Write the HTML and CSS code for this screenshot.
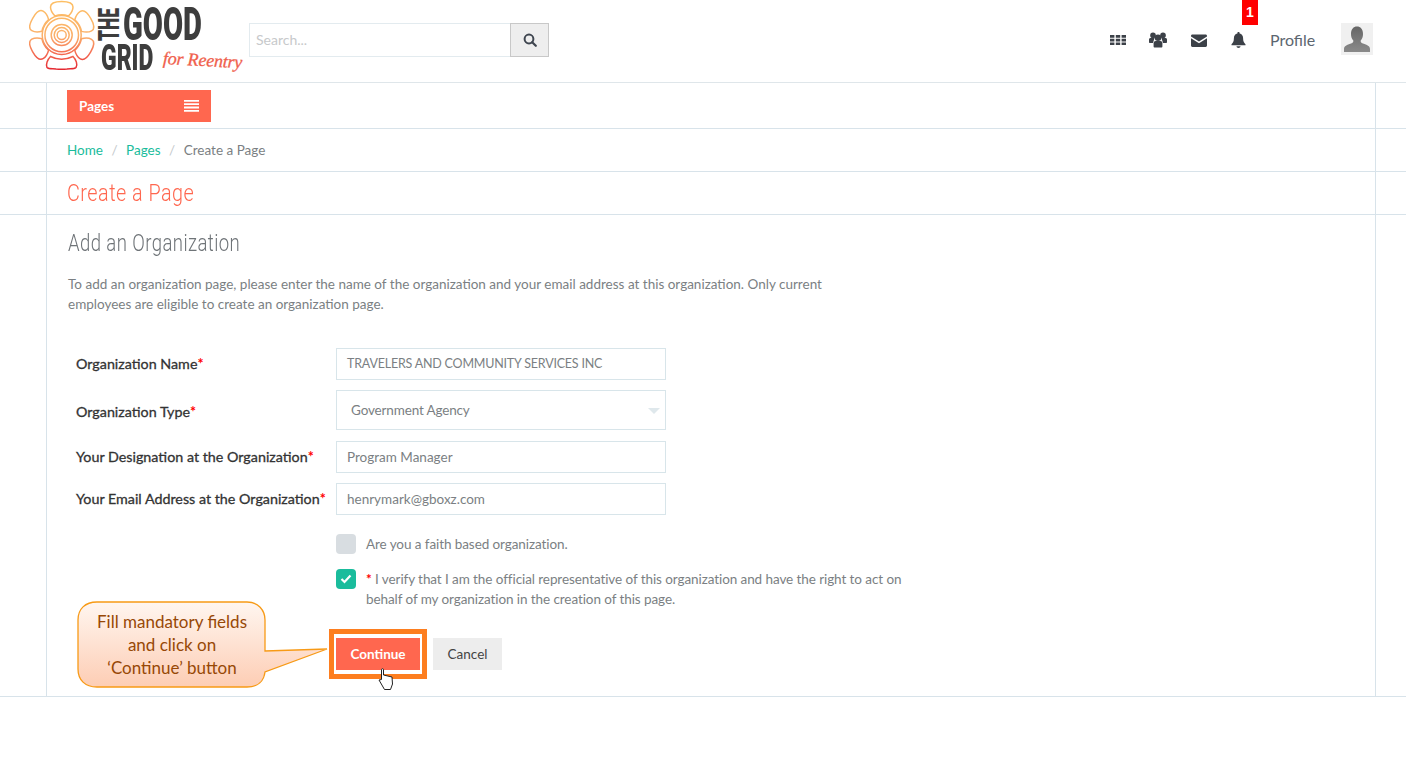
FILE: index.html
```html
<!DOCTYPE html>
<html lang="en">
<head>
<meta charset="utf-8">
<title>Create a Page</title>
<link rel="stylesheet" href="styles.css">
</head>
<body>
<header class="topbar">
  <div class="logo">
    <svg class="flower" width="70" height="72" viewBox="0 0 70 72">
      <defs>
        <linearGradient id="fl" x1="0" y1="0" x2="0" y2="1"><stop offset="0" stop-color="#fdbf63"/><stop offset=".5" stop-color="#fbb06a"/><stop offset=".75" stop-color="#f46a52"/><stop offset="1" stop-color="#e21c2b"/></linearGradient>
        <mask id="flm">
          <g fill="none" stroke="#fff" stroke-width="1.5">
            <circle cx="32.700" cy="35" r="19.500"/><circle cx="32.700" cy="35" r="16.800"/><circle cx="32.700" cy="35" r="10.500"/><circle cx="32.700" cy="35" r="7.500"/><circle cx="32.700" cy="35" r="4.500"/>
            <path id="pt" d="M21.500 7c0-3.500 3.500-5.500 11.200-5.500S44 3.500 44 7c0 4-2.500 7-4.500 9-4.500-1.500-9-1.500-13.500 0-2-2-4.500-5-4.500-9z"/>
            <use href="#pt" transform="rotate(60 32.700 35)"/><use href="#pt" transform="rotate(120 32.700 35)"/><use href="#pt" transform="rotate(240 32.700 35)"/><use href="#pt" transform="rotate(300 32.700 35)"/>
            <path d="M18 67.500c-1.500-3 .5-8 3.500-11 7 3.500 15 3.500 22.500 0 3 3 5 8 3 11-2 2-6 1-9 1.500-4 .5-7 .5-11 0-3-.5-7 .5-9-1.500z"/>
          </g>
        </mask>
      </defs>
      <rect width="70" height="72" fill="url(#fl)" mask="url(#flm)"/>
    </svg>
    <div class="wordmark">
      <span class="the">THE</span>
      <span class="good">GOOD</span>
      <span class="grid">GRID</span>
      <span class="reentry">for Reentry</span>
    </div>
  </div>
  <form class="search">
    <div class="search-input">Search...</div>
    <button class="search-btn" type="button" aria-label="Search">
      <svg width="14" height="14" viewBox="0 0 14 14"><circle cx="6" cy="6" r="4.400" fill="none" stroke="#3f4650" stroke-width="2"/><path d="M9.200 9.200l3.600 3.600" stroke="#3f4650" stroke-width="2.200" stroke-linecap="round"/></svg>
    </button>
  </form>
  <nav class="top-icons">
    <svg class="ic ic-grid" width="16" height="12" viewBox="0 0 16 12"><path fill="#3c4148" d="M0 1h4.400v2.700H0zM5.800 1h4.400v2.700H5.800zM11.600 1H16v2.700h-4.400zM0 4.700h4.400v2.700H0zM5.800 4.700h4.400v2.700H5.800zM11.600 4.700H16v2.700h-4.400zM0 8.400h4.400v2.700H0zM5.800 8.400h4.400v2.700H5.800zM11.600 8.400H16v2.700h-4.400z"/></svg>
    <svg class="ic ic-users" width="18" height="16" viewBox="0 0 18 16"><g fill="#3c4148"><circle cx="4" cy="3.400" r="2.800"/><circle cx="14" cy="3.400" r="2.800"/><path d="M0 7.500c0-1 1-1.400 2-1.400h3.500L4 11H1c-.6 0-1-.4-1-1zM18 7.500c0-1-1-1.400-2-1.400h-3.500L14 11h3c.6 0 1-.4 1-1z"/><circle cx="9" cy="5.800" r="3.300"/><path d="M4.600 11.500c0-1.800 1-2.500 2-2.500h4.800c1 0 2 .7 2 2.500v3c0 .6-.5 1-1 1H5.600c-.5 0-1-.4-1-1z"/></g></svg>
    <svg class="ic ic-mail" width="16" height="13" viewBox="0 0 16 13"><path fill="#3c4148" d="M1.400.5h13.200c.8 0 1.400.6 1.400 1.400v.5L8 7.500 0 2.400v-.5C0 1.100.6.500 1.400.5zM0 4.200l8 5 8-5v7.300c0 .8-.6 1.400-1.400 1.400H1.400C.6 12.900 0 12.300 0 11.500z"/></svg>
    <span class="bell-wrap">
      <span class="badge">1</span>
      <svg class="ic ic-bell" width="15" height="16" viewBox="0 0 15 16"><path fill="#3c4148" d="M7.500 0c.7 0 1.100.4 1.100 1v.5c2.300.5 3.500 2.300 3.500 4.700 0 3 .8 4.500 2.400 6v1H.5v-1c1.600-1.500 2.400-3 2.400-6 0-2.400 1.200-4.200 3.500-4.700V1c0-.6.4-1 1.100-1zM5.500 14.300h4c0 1-.9 1.700-2 1.700s-2-.7-2-1.700z"/></svg>
    </span>
    <span class="profile">Profile</span>
    <span class="avatar">
      <svg width="32" height="32" viewBox="0 0 32 32"><defs><linearGradient id="av" x1="0" y1="0" x2="0" y2="1"><stop offset="0" stop-color="#666"/><stop offset="1" stop-color="#8a8a8a"/></linearGradient></defs><rect width="32" height="32" fill="#f0f0f0"/><path fill="url(#av)" d="M3 29v-3c0-3 3-4 7-5.500 2-.8 2.500-1.500 2.300-3-1.500-1.500-2.300-3.500-2.300-6.500 0-5 2.500-7.500 6-7.500s6 2.500 6 7.500c0 3-.8 5-2.300 6.500-.2 1.500.3 2.200 2.300 3 4 1.500 7 2.500 7 5.500v3z"/></svg>
    </span>
  </nav>
</header>

<main class="page">
  <div class="row row-nav"><div class="inner">
    <div class="pages-btn"><span>Pages</span>
      <svg width="15" height="12" viewBox="0 0 15 12"><path fill="#fff" d="M0 0h15v1.800H0zM0 3.300h15v1.800H0zM0 6.600h15v1.800H0zM0 9.900h15v1.800H0z"/></svg>
    </div>
  </div></div>
  <div class="row row-crumb"><div class="inner crumbs">
    <a>Home</a><i>/</i><a>Pages</a><i>/</i><span>Create a Page</span>
  </div></div>
  <div class="row row-title"><div class="inner"><h1>Create a Page</h1></div></div>
  <div class="row row-body"><div class="inner body-inner">
    <h2>Add an Organization</h2>
    <p class="intro">To add an organization page, please enter the name of the organization and your email address at this organization. Only current employees are eligible to create an organization page.</p>
    <div class="form">
      <div class="frow f1"><label>Organization Name<b>*</b></label><div class="field upper">TRAVELERS AND COMMUNITY SERVICES INC</div></div>
      <div class="frow f2"><label>Organization Type<b>*</b></label><div class="field select">Government Agency<span class="caret"></span></div></div>
      <div class="frow f3"><label>Your Designation at the Organization<b>*</b></label><div class="field">Program Manager</div></div>
      <div class="frow f4"><label>Your Email Address at the Organization<b>*</b></label><div class="field">henrymark@gboxz.com</div></div>
      <div class="check c1"><span class="box"></span><span class="ctext">Are you a faith based organization.</span></div>
      <div class="check c2"><span class="box on"><svg width="12" height="10" viewBox="0 0 12 10"><path d="M1.500 5l3 3 6-6.500" fill="none" stroke="#fff" stroke-width="2.200"/></svg></span><span class="ctext"><b>*</b> I verify that I am the official representative of this organization and have the right to act on behalf of my organization in the creation of this page.</span></div>
      <div class="actions">
        <button type="button" class="btn primary">Continue</button>
        <button type="button" class="btn ghost">Cancel</button>
      </div>
    </div>
  </div></div>
</main>

<div class="hl"></div>
<svg class="cursor" width="18" height="24" viewBox="0 0 18 24"><path d="M3.500 1.500c0-1 2-1 2 0V7l8.500 2 .5 7-2 5.500H6.500L1 12l2.500-.5z" fill="#fff" stroke="#222" stroke-width="1"/></svg>
<div class="callout">
  <svg width="252" height="88" viewBox="0 0 252 88">
    <defs><linearGradient id="cg" x1="0" y1="0" x2="0" y2="1"><stop offset="0" stop-color="#fff6f0"/><stop offset="1" stop-color="#fdcdb4"/></linearGradient></defs>
    <path d="M20 1h150c11 0 18 8 18 18v31l62-2-62 23c-1 9-7 15-18 15H20C8 86 1 79 1 68V19C1 8 8 1 20 1z" fill="url(#cg)" stroke="#f79a16" stroke-width="1.300"/>
  </svg>
  <div class="ctxt">Fill mandatory fields<br>and click on<br>‘Continue’ button</div>
</div>
</body>
</html>
```
FILE: styles.css
```css
*{box-sizing:border-box}
html,body{margin:0;padding:0;background:#fff}
body{font-family:Lato,"Noto Sans",sans-serif;font-size:13.500px;color:#7b7f83;height:773px;overflow:hidden;position:relative}
.topbar{height:83px;border-bottom:1px solid #dfe6ea;display:flex;align-items:flex-start;position:relative}
.logo{width:249px;height:82px;position:relative;flex:none}
.flower{position:absolute;left:29px;top:0}
.wordmark{position:absolute;left:0;top:0;width:249px;height:82px;font-family:Roboto,"Liberation Sans",sans-serif;font-weight:900;color:#3d3d3d}
.good,.grid,.the,.reentry{position:absolute;white-space:nowrap;line-height:1}
.the{left:95px;top:41px;font-size:29px;transform-origin:0 0;transform:rotate(-90deg) scaleX(.6)}
.good{left:123px;top:0;font-size:47px;transform-origin:0 0;transform:scaleX(.62)}
.grid{left:101px;top:39px;font-size:37px;transform-origin:0 0;transform:scaleX(.62)}
.reentry{left:163px;top:49px;font-family:"Liberation Serif",serif;font-style:italic;font-weight:400;font-size:18px;color:#f0604c;letter-spacing:-.2px;-webkit-text-stroke:.3px #f0604c;transform-origin:0 50%;transform:rotate(3deg)}
.search{display:flex;margin-top:23px;height:34px}
.search-input{width:261px;height:34px;border:1px solid #e3ebef;border-right:none;padding:0 6px;line-height:32px;color:#c7c9cb;font-size:14px}
.search-btn{width:39px;height:34px;background:#eee;border:1px solid #c8c8c8;padding:0;display:flex;align-items:center;justify-content:center}
.top-icons{margin-left:auto;position:relative;width:297px;height:82px;flex:none}
.ic{position:absolute}
.ic-grid{left:1px;top:34px}
.ic-users{left:40px;top:32px}
.ic-mail{left:82px;top:34px}
.bell-wrap{position:absolute;left:122px;top:0}
.ic-bell{position:absolute;left:0;top:32px}
.badge{position:absolute;left:11px;top:0;width:16px;height:25px;background:#f00;color:#fff;font:700 14px/25px "Liberation Sans",sans-serif;text-align:center}
.profile{position:absolute;left:161px;top:30px;font-size:16px;line-height:20px;color:#5c6670}
.avatar{position:absolute;left:232px;top:23px;width:32px;height:32px}
.avatar svg{display:block}
.page{display:block}
.row{border-bottom:1px solid #d8e3ea}
.inner{margin-left:46px;width:1330px;border-left:1px solid #d8e3ea;border-right:1px solid #d8e3ea;height:100%}
.row-nav{height:46px}
.row-nav .inner{padding:7px 20px 0}
.pages-btn{width:144px;height:32px;background:#ff674f;color:#fff;font-weight:700;font-size:13.500px;display:flex;justify-content:space-between;align-items:center;padding:0 12px}
.row-crumb{height:43px}
.crumbs{display:flex;align-items:center;padding-left:20px;font-size:13.500px;color:#7b7f83}
.crumbs a{color:#1abc9c}
.crumbs i{font-style:normal;color:#c4c8cb;margin:0 8.500px}
.row-title{height:43px}
.row-title h1{margin:0;padding-left:20px;font-family:Roboto,sans-serif;font-weight:300;font-size:24px;line-height:42px;color:#ff674f;letter-spacing:.6px;transform-origin:20px 50%;transform:scaleX(.824)}
.row-body{height:482px}
.body-inner{padding:0 21px}
h2{margin:0;padding-top:15px;font-family:Roboto,sans-serif;font-weight:300;font-size:23px;line-height:28px;color:#6f7478;letter-spacing:.5px;transform-origin:0 50%;transform:scaleX(.807)}
.intro{margin:16px 0 0;width:770px;line-height:20px}
.form{margin-top:34px;position:relative}
.frow{display:flex;align-items:center}
.frow label{width:268px;flex:none;padding-left:8px;padding-bottom:2px;font-weight:400;font-size:14.300px;-webkit-text-stroke:.3px #333;color:#333;white-space:nowrap}
.frow label b{color:#f00;-webkit-text-stroke:0;font-weight:700}
.field{width:330px;height:32px;border:1px solid #d8e5ea;padding:0 10px;line-height:30px;font-size:13.500px;color:#7b7f83;white-space:nowrap}
.upper{font-size:12.500px;letter-spacing:-.2px}
.select{height:40px;line-height:38px;padding-left:14px;position:relative;letter-spacing:-.15px}
.f2 label{padding-bottom:0;padding-top:2px}
.caret{position:absolute;right:5px;top:17px;border:6px solid transparent;border-top:6px solid #dfe8ec;border-bottom:0}
.f2{margin-top:10px}
.f3{margin-top:11px}
.f4{margin-top:10px}
.check{display:flex;margin-left:268px;gap:10px;width:590px;line-height:20px;letter-spacing:-.08px}
.c1{margin-top:19px}
.c2{margin-top:15px}
.box{width:20px;height:20px;border-radius:4px;background:#d8dde1;flex:none;display:flex;align-items:center;justify-content:center}
.box.on{background:#1abc9c}
.ctext b{color:#f00}
.actions{display:flex;gap:13px;margin:29px 0 0 268px}
.btn{height:32px;border:none;font-family:inherit;font-size:13.500px;padding:0;line-height:32px}
.primary{width:84px;background:#ff674f;color:#fff;font-weight:700}
.ghost{width:69px;background:#ededed;color:#444}
.hl{position:absolute;left:329px;top:629px;width:98px;height:50px;border:5px solid #fd7e1f}
.cursor{position:absolute;left:378px;top:668px}
.callout{position:absolute;left:77px;top:601px;width:252px;height:88px}
.callout svg{display:block}
.ctxt{position:absolute;left:0;top:9px;width:190px;text-align:center;font-size:17px;line-height:23px;color:#974806}
```
